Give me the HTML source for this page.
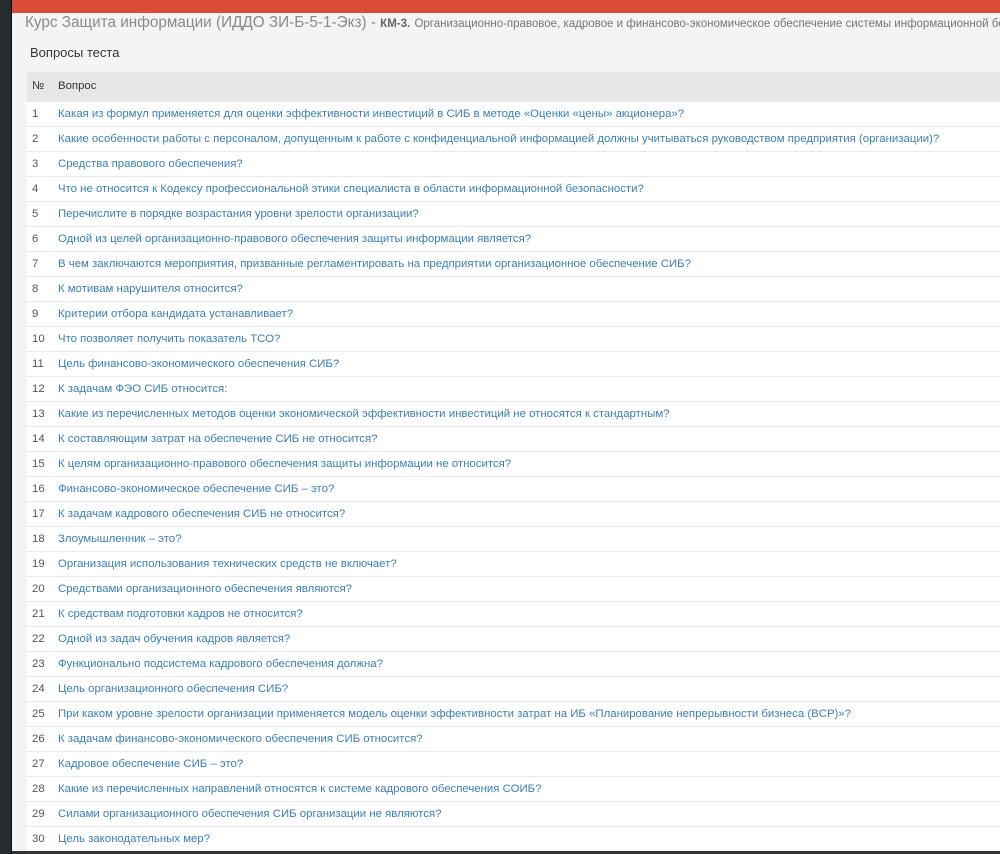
<!DOCTYPE html>
<html><head><meta charset="utf-8"><style>
*{margin:0;padding:0;box-sizing:border-box}
html,body{width:1000px;height:854px;overflow:hidden}
body{background:#f4f4f4;font-family:"Liberation Sans",sans-serif;position:relative}
.side{position:absolute;left:0;top:0;width:11px;height:854px;background:#262b2f}
.side2{position:absolute;left:11px;top:0;width:1px;height:854px;background:#111}
.top{position:absolute;left:12px;top:0;width:988px;height:13px;background:#dc4a38}
.title{position:absolute;left:25px;top:14px;width:975px;overflow:hidden;white-space:nowrap;font-size:15.3px;color:#8a8a8a}
.title b{font-size:11.5px;color:#666;font-weight:bold}
.title span{font-size:11.5px;color:#777}
.sub{position:absolute;left:30px;top:45px;font-size:13px;color:#333}
.wrap{position:absolute;left:27px;top:72px;width:973px;overflow:hidden}
table{width:973px;border-collapse:collapse;font-size:11.4px;white-space:nowrap}
th{background:#e7e7e7;height:29px;text-align:left;font-weight:normal;color:#333}
td{background:#fff;height:25px;border-top:1px solid #e4ebe8;color:#555}
td:first-child,th:first-child{width:31px;padding-left:5px}
td:nth-child(2){color:#3b7fb6}
.bot{position:absolute;left:12px;top:851px;width:988px;height:3px;background:#333}
</style></head><body>
<div class="side"></div><div class="side2"></div><div class="top"></div>
<div class="title">Курс Защита информации (ИДДО ЗИ-Б-5-1-Экз) - <b>КМ-3.</b> <span>Организационно-правовое, кадровое и финансово-экономическое обеспечение системы информационной безопасности</span></div>
<div class="sub">Вопросы теста</div>
<div class="wrap"><table>
<tr><th>№</th><th>Вопрос</th></tr>
<tr><td>1</td><td>Какая из формул применяется для оценки эффективности инвестиций в СИБ в методе «Оценки «цены» акционера»?</td></tr>
<tr><td>2</td><td>Какие особенности работы с персоналом, допущенным к работе с конфиденциальной информацией должны учитываться руководством предприятия (организации)?</td></tr>
<tr><td>3</td><td>Средства правового обеспечения?</td></tr>
<tr><td>4</td><td>Что не относится к Кодексу профессиональной этики специалиста в области информационной безопасности?</td></tr>
<tr><td>5</td><td>Перечислите в порядке возрастания уровни зрелости организации?</td></tr>
<tr><td>6</td><td>Одной из целей организационно-правового обеспечения защиты информации является?</td></tr>
<tr><td>7</td><td>В чем заключаются мероприятия, призванные регламентировать на предприятии организационное обеспечение СИБ?</td></tr>
<tr><td>8</td><td>К мотивам нарушителя относится?</td></tr>
<tr><td>9</td><td>Критерии отбора кандидата устанавливает?</td></tr>
<tr><td>10</td><td>Что позволяет получить показатель ТСО?</td></tr>
<tr><td>11</td><td>Цель финансово-экономического обеспечения СИБ?</td></tr>
<tr><td>12</td><td>К задачам ФЭО СИБ относится:</td></tr>
<tr><td>13</td><td>Какие из перечисленных методов оценки экономической эффективности инвестиций не относятся к стандартным?</td></tr>
<tr><td>14</td><td>К составляющим затрат на обеспечение СИБ не относится?</td></tr>
<tr><td>15</td><td>К целям организационно-правового обеспечения защиты информации не относится?</td></tr>
<tr><td>16</td><td>Финансово-экономическое обеспечение СИБ – это?</td></tr>
<tr><td>17</td><td>К задачам кадрового обеспечения СИБ не относится?</td></tr>
<tr><td>18</td><td>Злоумышленник – это?</td></tr>
<tr><td>19</td><td>Организация использования технических средств не включает?</td></tr>
<tr><td>20</td><td>Средствами организационного обеспечения являются?</td></tr>
<tr><td>21</td><td>К средствам подготовки кадров не относится?</td></tr>
<tr><td>22</td><td>Одной из задач обучения кадров является?</td></tr>
<tr><td>23</td><td>Функционально подсистема кадрового обеспечения должна?</td></tr>
<tr><td>24</td><td>Цель организационного обеспечения СИБ?</td></tr>
<tr><td>25</td><td>При каком уровне зрелости организации применяется модель оценки эффективности затрат на ИБ «Планирование непрерывности бизнеса (BCP)»?</td></tr>
<tr><td>26</td><td>К задачам финансово-экономического обеспечения СИБ относится?</td></tr>
<tr><td>27</td><td>Кадровое обеспечение СИБ – это?</td></tr>
<tr><td>28</td><td>Какие из перечисленных направлений относятся к системе кадрового обеспечения СОИБ?</td></tr>
<tr><td>29</td><td>Силами организационного обеспечения СИБ организации не являются?</td></tr>
<tr><td>30</td><td>Цель законодательных мер?</td></tr>
</table></div>
<div class="bot"></div>
</body></html>
